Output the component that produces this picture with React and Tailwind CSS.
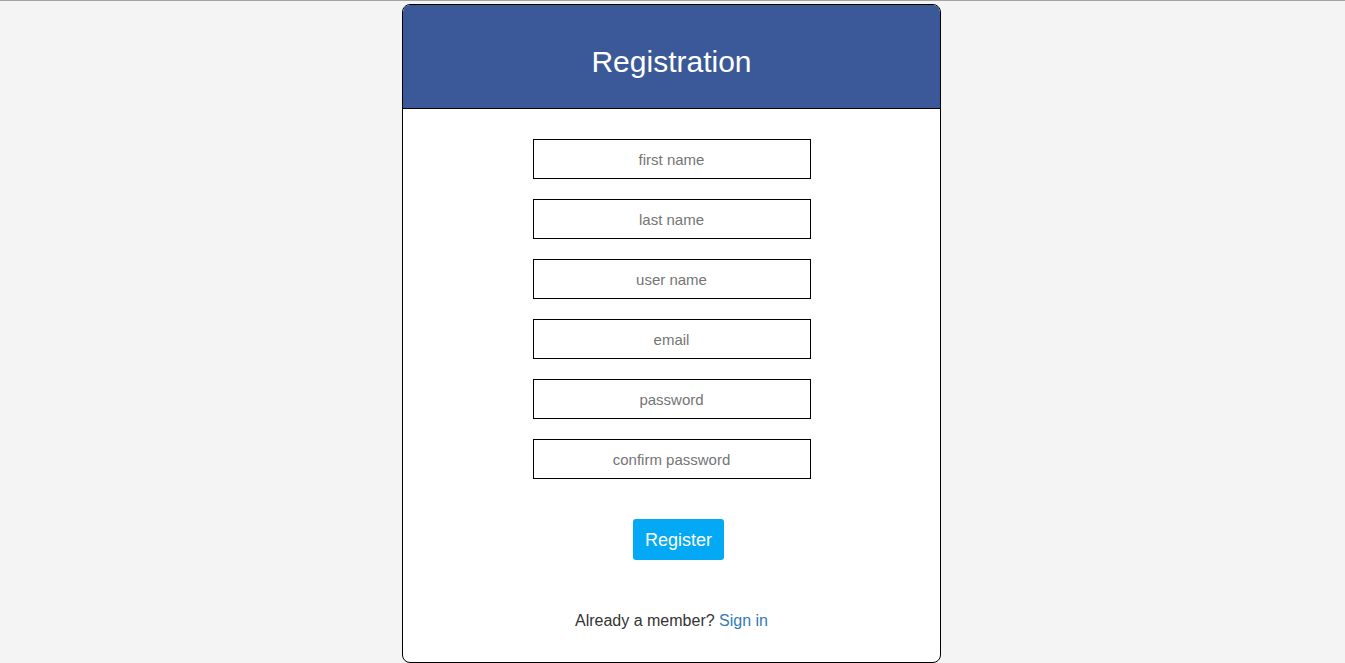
export default function App() {
  const fields = [
    { placeholder: "first name", type: "text" },
    { placeholder: "last name", type: "text" },
    { placeholder: "user name", type: "text" },
    { placeholder: "email", type: "email" },
    { placeholder: "password", type: "password" },
    { placeholder: "confirm password", type: "password" },
  ];

  return (
    <div
      className="min-h-screen bg-[#f4f4f4] border-t border-[#a3a3a3] pt-[3px] pr-[2px] flex justify-center"
      style={{ fontFamily: '"Liberation Sans", Arial, sans-serif' }}
    >
      <div className="w-[539px] h-[659px] bg-white border border-black rounded-lg overflow-hidden flex flex-col">
        <header className="h-[104px] shrink-0 pt-[10px] bg-[#3b5998] border-b border-black flex items-center justify-center">
          <h1 className="text-[30px] leading-none text-white">Registration</h1>
        </header>

        <form
          className="flex flex-col items-center pt-[30px]"
          onSubmit={(e) => e.preventDefault()}
        >
          <div className="flex flex-col gap-5">
            {fields.map((f) => (
              <input
                key={f.placeholder}
                type={f.type}
                placeholder={f.placeholder}
                className="w-[278px] h-10 border border-black bg-white text-center text-[15px] text-[#333] placeholder:text-[#757575] outline-none"
              />
            ))}
          </div>

          <button
            type="submit"
            className="mt-10 h-[41px] px-3 pt-px rounded-[3px] bg-[#03a9f4] text-white text-[18px] ml-[14px]"
          >
            Register
          </button>

          <p className="mt-[52px] text-[16px] leading-[18px] text-[#333]">
            Already a member?{" "}
            <a href="#" className="text-[#337ab7]">
              Sign in
            </a>
          </p>
        </form>
      </div>
    </div>
  );
}
